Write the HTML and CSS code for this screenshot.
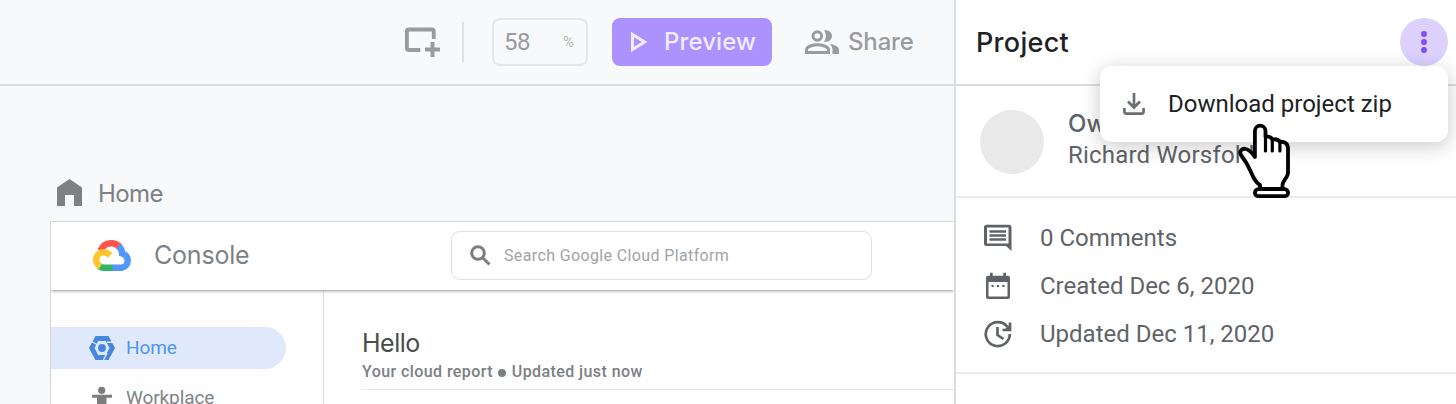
FILE: index.html
```html
<!DOCTYPE html>
<html lang="en">
<head>
<meta charset="utf-8">
<title>Project</title>
<link rel="stylesheet" href="styles.css">
</head>
<body>
<div class="app">
  <main class="workspace">
    <header class="toolbar">
      <svg class="icon-frame" width="36" height="32" viewBox="0 0 36 32" fill="none" stroke="#999c9f" stroke-width="4"><path d="M17 23H5q-2 0-2-2V4.500q0-2 2-2h24q2 0 2 2V12" transform="translate(0 1) scale(.96 1)"/><path d="M28.500 16v15M21 23.500h15"/></svg>
      <span class="divider"></span>
      <div class="zoom-box"><span class="zoom-value">58</span><span class="zoom-unit">%</span></div>
      <button class="preview"><svg width="18" height="22" viewBox="0 0 18 22" fill="none" stroke="#f1ebff" stroke-width="3"><path d="M2.500 3.500v15L14.500 11z"/></svg><span class="preview-label">Preview</span></button>
      <div class="share">
        <svg width="34" height="24" viewBox="0 0 34 24"><circle cx="12.300" cy="6" r="4.300" fill="none" stroke="#999c9f" stroke-width="3"/><path d="M1.500 22.500v-3c0-3 7-4.800 11-4.800s11 1.800 11 4.800v3z" fill="none" stroke="#999c9f" stroke-width="3"/><path d="M19 .4c4-1 8 1.600 8 5.600s-4 6.600-8 5.600c2.400-3.200 2.400-8 0-11.200zM25 14c5 .8 9 2.800 9 6v4h-6.500v-4c0-2.500-1-4.500-2.500-6z" fill="#999c9f"/></svg>
        <span class="share-label">Share</span>
      </div>
    </header>
    <section class="canvas">
      <div class="board-title">
        <svg width="25" height="27" viewBox="0 0 25 27"><path d="M0 8.500 12.500 0 25 8.500V27H17V16H8v11H0z" fill="#7d8184"/></svg>
        <span class="board-label">Home</span>
      </div>
      <div class="board">
        <div class="board-header">
          <svg class="cloud" width="38" height="31" viewBox="0 0 38 31" fill="none" stroke-width="6.500"><path d="M7.500 10.500C10 5 14 3.200 18.500 3.200c3.500 0 6 1.300 8.300 3.800" stroke="#ff544d"/><path d="M25.500 6c2.500 2.300 3.500 5 3.700 7.500 3.700 1.300 5.500 3.500 5.500 7 0 4-3 7.200-7 7.200H19" stroke="#5297ff"/><path d="M19.500 27.700H11c-2 0-3.800-.6-5.200-2" stroke="#32b366"/><path d="M7.500 26.500C4.800 25 3.200 22.500 3.200 19.700c0-4.500 3.500-7.500 7.500-7.500 2.700 0 4.500 1 6.500 3.300" stroke="#ffc42e"/></svg>
          <span class="console">Console</span>
          <div class="search">
            <svg width="21" height="21" viewBox="0 0 21 21" fill="none" stroke="#7a7e82" stroke-width="3"><circle cx="8" cy="8" r="6.300"/><path d="m12.500 12.500 7 7"/></svg>
            <span class="search-text">Search Google Cloud Platform</span>
          </div>
        </div>
        <div class="board-body">
          <nav class="nav">
            <div class="nav-item selected">
              <svg width="26" height="24" viewBox="0 0 26 24"><path fill="#4487df" fill-rule="evenodd" d="M6.500 0h13L26 12l-6.500 12h-13L0 12zM9.200 5 5.500 12l3.700 7h7.600l3.700-7-3.700-7z"/><circle cx="13" cy="12" r="3.900" fill="#4487df"/><path d="m2.500 5.500 5.500 3M14.500 24l3.500-7M18 6.200h6" stroke="#e0e9fb" stroke-width="1.400"/></svg>
              <span class="nav-home">Home</span>
            </div>
            <div class="nav-item">
              <svg width="26" height="26" viewBox="0 0 26 26" fill="#7d7d7d"><circle cx="12.700" cy="5.300" r="3.600"/><path d="M3 9.700h20v3H17.500V26h-9.500V12.700H3z"/></svg>
              <span class="nav-work">Workplace</span>
            </div>
          </nav>
          <div class="report">
            <div class="hello">Hello</div>
            <div class="report-meta">Your cloud report <i class="dot"></i> Updated just now</div>
          </div>
        </div>
      </div>
    </section>
  </main>
  <aside class="panel">
    <header class="panel-header">
      <h1 class="panel-title">Project</h1>
      <button class="more"><svg width="8" height="24" viewBox="0 0 8 24" fill="#7c4dff"><circle cx="4" cy="4" r="2.900"/><circle cx="4" cy="12" r="2.900"/><circle cx="4" cy="20" r="2.900"/></svg></button>
    </header>
    <section class="owner">
      <span class="avatar"></span>
      <div><div class="owner-label">Owner</div><div class="owner-name">Richard Worsfold</div></div>
    </section>
    <section class="details">
      <div class="detail"><svg width="28" height="28" viewBox="0 0 28 28"><path d="M2.500 .7h22.500q2.500 0 2.500 2.500V27l-5.500-5H2.500Q0 22 0 19.500V3.200Q0 .7 2.500.7zM3 3.500v16h21.500v-16z" fill="#5f6368" fill-rule="evenodd"/><path d="M5.500 7.500h16.500M5.500 11.500h16.500M5.500 15.500h16.500" stroke="#5f6368" stroke-width="2.300"/></svg><span class="comments">0 Comments</span></div>
      <div class="detail"><svg width="28" height="28" viewBox="0 0 28 28"><path d="M6 .7h2.700v3h10.600v-3H22v3h2q2 0 2 2V25q0 2-2 2H4q-2 0-2-2V5.700q0-2 2-2h2zM4.500 10v14.500h19V10z" fill="#5f6368" fill-rule="evenodd"/><path d="M7.500 14h2.200M12.900 14h2.200M18.300 14h2.200" stroke="#5f6368" stroke-width="2.200"/></svg><span class="created">Created Dec 6, 2020</span></div>
      <div class="detail"><svg width="28" height="28" viewBox="0 0 28 28" fill="none" stroke="#5f6368" stroke-width="2.700"><path d="M25.800 14A12 12 0 1 1 23.500 7M13.500 7v8l6 4"/><path d="M26 2.500v7.500h-7.500"/><path d="M26 4.500V10h-6z" fill="#5f6368" stroke="none"/></svg><span class="updated">Updated Dec 11, 2020</span></div>
    </section>
  </aside>
</div>
<div class="menu">
  <svg width="22" height="22" viewBox="0 0 22 22" fill="none" stroke="#6b6f73" stroke-width="2.700"><path d="M11 0v14M5 8.500l6 6 6-6M1.400 15v3.600q0 2 2 2h15.200q2 0 2-2V15"/></svg>
  <span class="menu-text">Download project zip</span>
</div>
<svg class="cursor" width="56" height="78" viewBox="1236 122 56 78" fill="#fff" stroke="#000" stroke-width="3.800" stroke-linecap="round" stroke-linejoin="round"><path d="M1254.900 157V131a5.300 5.300 0 0 1 10.600 0v5.500q5-.5 6.800 3 5.500-1 7.400 2.300c5.300-.5 8.300 2 8.300 7V173c0 4-5.500 8-5.500 12v4h-22.500v-4c-5-3-7-8-9.500-14-3-7-5-10-9.500-16-2.500-4 1.500-7 5-6 4 1 6 4 8.900 8z"/><path d="M1265.500 136v15M1272.300 139.500V151M1279.900 142v9" fill="none" stroke-width="3.200"/><rect x="1254.900" y="189.200" width="33.200" height="7" rx="3.500"/></svg>
</body>
</html>
```
FILE: styles.css
```css
* { box-sizing: border-box; }
body { margin: 0; width: 1456px; height: 404px; overflow: hidden; background: #fff; font-family: Roboto, "Liberation Sans", sans-serif; }
svg { display: block; flex: none; }
span, .owner-label, .owner-name, .report-meta, .hello { white-space: nowrap; }
button { border: 0; padding: 0; font: inherit; }
.app { display: flex; height: 404px; }
.workspace { width: 954px; background: #f8f9fb; display: flex; flex-direction: column; overflow: hidden; }
.toolbar { height: 86px; flex: none; border-bottom: 2px solid #dadce0; display: flex; align-items: center; padding-left: 404px; }
.divider { width: 2px; height: 40px; background: #dfe0e3; margin-left: 22px; }
.zoom-box { width: 96px; height: 48px; margin-left: 28px; border: 2px solid #e5e6e8; border-radius: 8px; display: flex; align-items: center; justify-content: space-between; padding: 0 12px 0 10px; color: #999c9f; }
.zoom-value { font-size: 24px; letter-spacing: -.5px; }
.zoom-unit { font-size: 15px; color: #b4b6b8; }
.preview { width: 160px; height: 48px; margin-left: 24px; padding-left: 18px; border-radius: 8px; background: #ac92ff; display: flex; align-items: center; color: #f1ebff; }
.preview-label { font: 500 24px/32px Inter, sans-serif; letter-spacing: .1px; margin-left: 16px; }
.share { display: flex; align-items: center; margin-left: 33px; gap: 9px; color: #999c9f; }
.share-label { font: 500 24px/32px Inter, sans-serif; letter-spacing: -.15px; }
.canvas { padding: 93px 0 0 50px; flex: 1; }
.board-title { height: 27px; display: flex; align-items: center; padding-left: 7px; gap: 16px; }
.board-label { font: 400 24px/30px Inter, sans-serif; color: #7d8184; letter-spacing: -.6px; padding-top: 3px; }
.board { margin-top: 15px; border: 1px solid #d5d7dc; border-right: 0; background: #fefefe; height: 220px; overflow: hidden; }
.board-header { height: 68px; background: #fff; display: flex; align-items: center; padding: 0 0 2px 42px; box-shadow: 0 1px 3px rgba(0,0,0,.4); position: relative; }
.console { font: 400 25px/32px Inter, sans-serif; color: #7d8184; margin-left: 23px; letter-spacing: -.2px; width: 297px; }
.search { width: 421px; height: 49px; border: 1px solid #dddfe4; border-radius: 9px; display: flex; align-items: center; padding-left: 18px; }
.search-text { font-size: 16px; letter-spacing: .37px; color: #a1a3a5; margin-left: 13px; }
.board-body { display: flex; height: 150px; }
.nav { width: 273px; border-right: 1px solid #dedede; padding-top: 37px; display: flex; flex-direction: column; gap: 8px; }
.nav-item { width: 235px; height: 42px; display: flex; align-items: center; padding-left: 38px; gap: 11px; font-size: 19px; color: #808386; }
.nav-home, .nav-work { padding-bottom: 2px; letter-spacing: -.1px; }
.selected { background: #e0e9fb; border-radius: 0 21px 21px 0; color: #5294ed; }
.report { flex: 1; margin-left: 38px; padding-top: 37px; }
.hello { font: 400 25px/32px Inter, sans-serif; color: #4a4b4c; letter-spacing: -.5px; }
.report-meta { height: 31px; border-bottom: 1px solid #e8e8e8; font-weight: 500; font-size: 16px; line-height: 25px; letter-spacing: .42px; color: #7c8084; }
.dot { display: inline-block; width: 8px; height: 8px; border-radius: 50%; background: #7c8084; margin: 0 1px; }
.panel { width: 502px; border-left: 2px solid #dadce0; background: #fff; }
.panel-header { height: 86px; border-bottom: 2px solid #dadce0; padding: 0 8px 0 20px; display: flex; align-items: center; justify-content: space-between; }
.panel-title { margin: 0; padding-top: 1px; font: 500 27px/34px Inter, sans-serif; letter-spacing: .3px; color: #202124; }
.more { width: 48px; height: 48px; border-radius: 50%; background: #dcd1ff; display: grid; place-items: center; }
.owner { height: 112px; border-bottom: 2px solid #ebebeb; padding: 24px 0 0 24px; display: flex; gap: 24px; }
.avatar { width: 64px; height: 64px; border-radius: 50%; background: #e9e9e9; }
.owner-label, .owner-name { font-size: 24px; line-height: 32px; color: #5f6368; }
.owner-name { letter-spacing: .2px; }
.owner-label { font: 500 24px/27px Inter, sans-serif; padding-bottom: 2px; }
.details { height: 176px; border-bottom: 2px solid #ebebeb; padding: 16px 0 0 28px; }
.detail { height: 48px; display: flex; align-items: center; gap: 28px; font-size: 24px; color: #5f6368; }
.menu { position: absolute; left: 1100px; top: 66px; width: 348px; height: 76px; border-radius: 12px; background: #fff; box-shadow: 0 4px 20px rgba(0,0,0,.22); display: flex; align-items: center; padding-left: 23px; gap: 23px; font-size: 24px; color: #202124; }
.cursor { position: absolute; left: 1236px; top: 122px; }
```
